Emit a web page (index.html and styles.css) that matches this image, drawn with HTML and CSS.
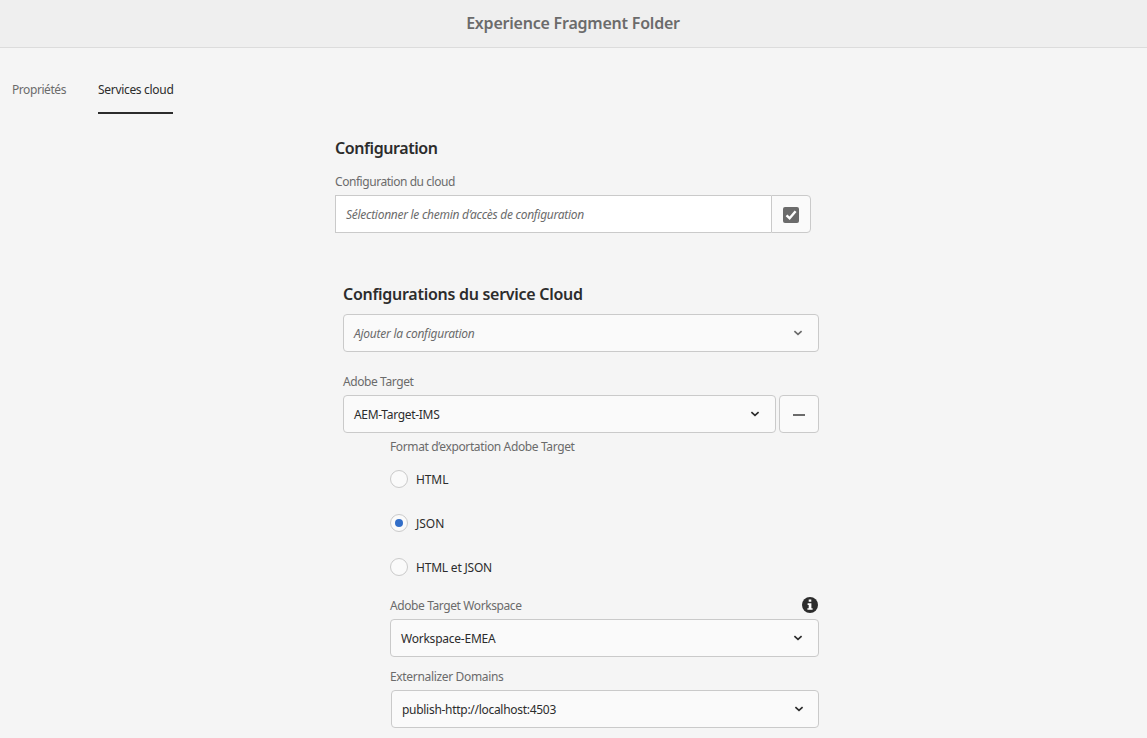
FILE: index.html
```html
<!DOCTYPE html>
<html lang="fr">
<head>
<meta charset="utf-8">
<title>Experience Fragment Folder</title>
<link rel="stylesheet" href="styles.css">
</head>
<body>
<header class="topbar"><h1 class="title">Experience Fragment Folder</h1></header>
<nav class="tabs">
  <a class="tab tab-props">Propriétés</a>
  <a class="tab tab-cloud is-active">Services cloud</a>
</nav>
<main class="content">
  <section class="config">
    <h2 class="heading h-config">Configuration</h2>
    <label class="label l-cloud">Configuration du cloud</label>
    <div class="picker">
      <div class="picker-input"><span class="placeholder p-path">Sélectionner le chemin d’accès de configuration</span></div>
      <button class="picker-button" aria-label="Sélectionner"><svg width="16" height="16" viewBox="0 0 16 16"><rect width="16" height="16" rx="2" fill="#6b6b6b"/><path d="M3.5 8.4 6.6 11.2 12.6 4.3" fill="none" stroke="#fff" stroke-width="2.4"/></svg></button>
    </div>
  </section>
  <section class="services">
    <h2 class="heading h-services">Configurations du service Cloud</h2>
    <div class="select select-add"><span class="placeholder p-add">Ajouter la configuration</span><svg class="chevron muted" width="10" height="6" viewBox="0 0 10 6"><path d="M1.4 1.1 5 4.3 8.6 1.1"/></svg></div>
    <label class="label l-target">Adobe Target</label>
    <div class="row">
      <div class="select"><span class="value v-ims">AEM-Target-IMS</span><svg class="chevron" width="10" height="6" viewBox="0 0 10 6"><path d="M1.4 1.1 5 4.3 8.6 1.1"/></svg></div>
      <button class="remove" aria-label="Supprimer"><svg width="12" height="2" viewBox="0 0 12 2"><rect width="12" height="2" fill="#6b6b6b"/></svg></button>
    </div>
    <div class="nested">
      <label class="label l-format">Format d’exportation Adobe Target</label>
      <div class="radio"><i class="dot"></i><span class="r-html">HTML</span></div>
      <div class="radio"><i class="dot checked"></i><span class="r-json">JSON</span></div>
      <div class="radio"><i class="dot"></i><span class="r-both">HTML et JSON</span></div>
      <div class="label-row"><label class="label l-workspace">Adobe Target Workspace</label>
        <svg class="info" width="16" height="16" viewBox="0 0 16 16"><circle cx="8" cy="8" r="8" fill="#2c2c2c"/><path d="M6.7 2.6h2.6v2.2H6.7zM5.6 6.3h3.8v4.9h1.2v1.6H5.4v-1.6h1.3V7.9H5.6z" fill="#fff"/></svg></div>
      <div class="select"><span class="value v-emea">Workspace-EMEA</span><svg class="chevron" width="10" height="6" viewBox="0 0 10 6"><path d="M1.4 1.1 5 4.3 8.6 1.1"/></svg></div>
      <label class="label l-domains">Externalizer Domains</label>
      <div class="select select-domains"><span class="value v-publish">publish-http://localhost:4503</span><svg class="chevron" width="10" height="6" viewBox="0 0 10 6"><path d="M1.4 1.1 5 4.3 8.6 1.1"/></svg></div>
    </div>
  </section>
</main>
</body>
</html>
```
FILE: styles.css
```css
* { box-sizing: border-box; }
body { margin: 0; height: 738px; overflow: hidden; background: #f5f5f5; color: #2c2c2c; font: 12px/18px "Noto Sans", sans-serif; white-space: nowrap; }
.topbar { height: 48px; background: #efefef; border-bottom: 1px solid #dcdcdc; display: flex; justify-content: center; padding: 11px 1px 0 0; }
.title { margin: 0; font-size: 16px; line-height: 24px; font-weight: 600; color: #6b6b6b; letter-spacing: -.22px; }
.tabs { display: flex; gap: 32px; padding: 32px 0 0 12px; height: 66px; }
.tab { height: 34px; padding-top: 1px; color: #6b6b6b; border-bottom: 2px solid transparent; }
.tab.is-active { color: #2c2c2c; border-color: #2c2c2c; }
.tab-props { width: 54px; letter-spacing: -.43px; }
.tab-cloud { width: 75px; letter-spacing: -.31px; }
.content { width: 484px; margin-left: 335px; padding-top: 22px; }
.heading { margin: 0; font-size: 16px; line-height: 24px; font-weight: 600; }
.h-config { letter-spacing: -.42px; }
.h-services { letter-spacing: -.28px; }
.label { display: block; color: #6b6b6b; }
.l-cloud { margin-top: 13px; letter-spacing: -.45px; }
.picker { display: flex; width: 476px; height: 38px; margin-top: 4px; }
.picker-input { flex: 1; background: #fff; border: 1px solid #cacaca; border-right: 0; padding: 10px 0 0 10px; }
.picker-button { width: 40px; padding: 1px 1px 0 0; background: #fafafa; border: 1px solid #cacaca; border-radius: 0 4px 4px 0; display: flex; align-items: center; justify-content: center; }
.placeholder { font-style: italic; color: #6b6b6b; }
.p-path { letter-spacing: -.28px; }
.p-add { letter-spacing: -.25px; }
.services { margin: 49px 0 0 8px; }
.select { flex: 1; height: 38px; background: #fafafa; border: 1px solid #cacaca; border-radius: 4px; padding: 0 15px 0 10px; display: flex; align-items: center; justify-content: space-between; }
.select .placeholder, .select .value { padding-top: 2px; }
.select-add { margin-top: 8px; }
.chevron { fill: none; stroke: #2c2c2c; stroke-width: 1.7; }
.chevron.muted { stroke: #6b6b6b; }
.l-target { margin-top: 21px; letter-spacing: -.41px; }
.v-ims { letter-spacing: -.31px; }
.row { display: flex; gap: 3px; margin-top: 4px; }
.remove { width: 40px; padding: 2px 1px 0 0; background: #fafafa; border: 1px solid #cacaca; border-radius: 4px; display: flex; align-items: center; justify-content: center; }
.nested { margin-left: 47px; padding-top: 5px; }
.l-format { margin-bottom: 1px; letter-spacing: -.37px; }
.radio { display: flex; align-items: center; gap: 8px; height: 44px; }
.radio span { padding-top: 1px; }
.r-html { letter-spacing: -.1px; }
.r-both { letter-spacing: -.2px; }
.dot { width: 18px; height: 18px; border: 1px solid #cacaca; border-radius: 50%; background: #fafafa; display: flex; align-items: center; justify-content: center; }
.dot.checked::after { content: ""; width: 8px; height: 8px; border-radius: 50%; background: #326ec8; }
.label-row { display: flex; justify-content: space-between; align-items: flex-start; margin: 8px 1px 4px 0; height: 18px; }
.l-workspace { letter-spacing: -.4px; }
.v-emea { letter-spacing: -.23px; }
.l-domains { margin: 11px 0 4px; letter-spacing: -.33px; }
.v-publish { letter-spacing: -.29px; }
.select-domains { margin-left: 1px; padding-right: 14px; }
```
